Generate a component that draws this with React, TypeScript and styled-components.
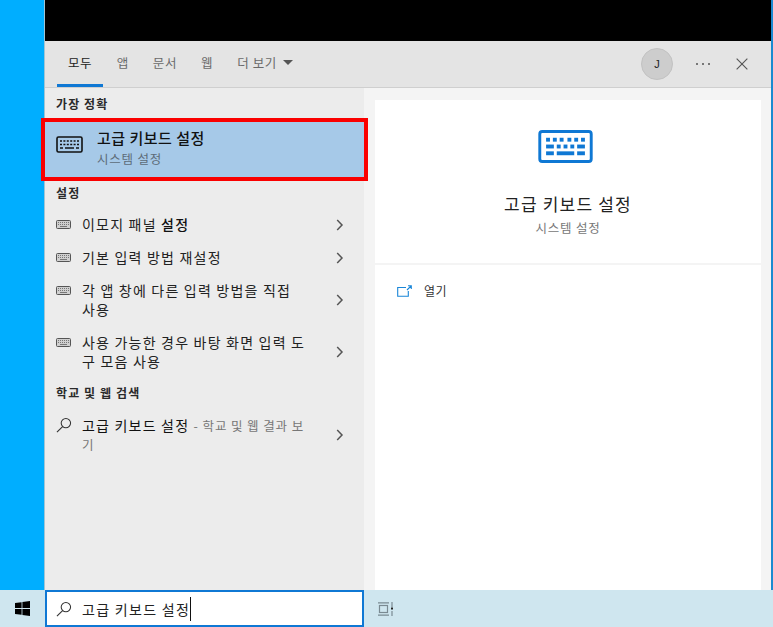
import styled, { createGlobalStyle } from "styled-components";
import type { ReactNode } from "react";

const Global = createGlobalStyle`
  html, body { margin: 0; padding: 0; }
  body {
    width: 773px;
    height: 627px;
    overflow: hidden;
    font-family: "Noto Sans CJK KR", "Liberation Sans", sans-serif;
  }
  * { box-sizing: border-box; }
`;

const Desktop = styled.div`
  width: 773px;
  height: 627px;
  display: flex;
  flex-direction: column;
  background: #00aeff;
`;
const Upper = styled.div`
  height: 590px;
  padding-left: 44px;
  display: flex;
`;
const Flyout = styled.div`
  flex: 1;
  display: flex;
  flex-direction: column;
  border-left: 1px solid #9fc4d4;
  border-right: 2px solid #1b8ad0;
`;
const BlackBar = styled.div`
  height: 41px;
  background: #000;
  flex: none;
`;
const Header = styled.div`
  height: 47px;
  flex: none;
  display: flex;
  align-items: stretch;
  padding: 0 23px 0 12px;
  background: #e4e4e4;
  border-bottom: 1px solid #cfcfcf;
`;
const Tab = styled.div<{ $active?: boolean }>`
  display: flex;
  align-items: center;
  gap: 6px;
  padding: 0 ${({ $active }) => ($active ? "11px" : "12px")} 3px;
  margin-right: ${({ $active }) => ($active ? "1.5px" : "0")};
  font-size: 12.5px;
  letter-spacing: 0.6px;
  color: ${({ $active }) => ($active ? "#222" : "#6a6a6a")};
  box-shadow: ${({ $active }) => ($active ? "inset 0 -3px 0 #0f78d4" : "none")};
`;
const Caret = styled.span`
  width: 0;
  height: 0;
  border-left: 5px solid transparent;
  border-right: 5px solid transparent;
  border-top: 5px solid #555;
`;
const HeaderRight = styled.div`
  margin-left: auto;
  display: flex;
  align-items: center;
`;
const Avatar = styled.div`
  width: 32px;
  height: 32px;
  border-radius: 50%;
  background: #cdcdcd;
  border: 1px solid #c2c2c2;
  display: flex;
  align-items: center;
  justify-content: center;
  font-size: 11px;
  color: #222;
  font-family: "Liberation Sans", sans-serif;
`;
const Dots = styled.div`
  margin-left: 23px;
  margin-right: 26px;
  display: flex;
  gap: 4px;
`;
const Dot = styled.span`
  width: 2px;
  height: 2px;
  background: #777;
`;
const Body = styled.div`
  flex: 1;
  display: flex;
  min-height: 0;
`;
const Results = styled.div`
  width: 319px;
  flex: none;
  background: #ececec;
  display: flex;
  flex-direction: column;
`;
const SectionLabel = styled.div<{ $top?: number }>`
  font-size: 12px;
  font-weight: 700;
  letter-spacing: 1.1px;
  color: #2a2a2a;
  line-height: 16px;
  padding-left: 11px;
  margin-top: ${({ $top }) => $top ?? 0}px;
`;
const BestRow = styled.div`
  height: 55px;
  flex: none;
  margin: 10px 0 8px;
  background: #a6c9e8;
  outline: 4px solid #fa0000;
  position: relative;
  z-index: 1;
  display: flex;
  align-items: flex-start;
  padding-left: 11px;
  gap: 14px;
`;
const BestIcon = styled.div`
  display: flex;
  margin-top: 14px;
`;
const BestText = styled.div`
  display: flex;
  flex-direction: column;
  margin-top: 6px;
`;
const BestTitle = styled.div`
  font-size: 15px;
  font-weight: 500;
  letter-spacing: 0.5px;
  line-height: 20px;
  color: #111;
`;
const BestSub = styled.div`
  font-size: 12.5px;
  letter-spacing: 0.8px;
  line-height: 20px;
  margin-top: 1px;
  color: #5d6c78;
`;
const Row = styled.div<{ $h: number; $top?: number }>`
  height: ${({ $h }) => $h}px;
  flex: none;
  margin-top: ${({ $top }) => $top ?? 0}px;
  display: flex;
  align-items: center;
  padding: 0 20px 0 11px;
`;
const RowIcon = styled.div<{ $pad: number }>`
  width: 26px;
  flex: none;
  align-self: flex-start;
  display: flex;
  padding-top: ${({ $pad }) => $pad}px;
`;
const RowText = styled.div`
  flex: 1;
  font-size: 14px;
  letter-spacing: 1.2px;
  line-height: 19px;
  color: #222;
  padding-right: 28px;
  word-break: break-all;
`;
const Bold = styled.span`
  font-weight: 500;
  color: #111;
`;
const Term = styled.span`
  color: #111;
`;
const Muted = styled.span`
  font-size: 12.5px;
  letter-spacing: 0.9px;
  color: #777;
`;
const Preview = styled.div`
  flex: 1;
  background: #f4f4f4;
  padding: 12px 10px 0 11px;
  display: flex;
  flex-direction: column;
  gap: 2px;
`;
const PreviewTop = styled.div`
  height: 163px;
  flex: none;
  background: #fff;
  display: flex;
  flex-direction: column;
  align-items: center;
  padding-top: 30px;
`;
const PreviewIcon = styled.div`
  display: flex;
  margin-right: 5px;
`;
const PreviewTitle = styled.div`
  margin-top: 29px;
  font-size: 17px;
  letter-spacing: 1.2px;
  line-height: 24px;
  color: #222;
`;
const PreviewSub = styled.div`
  font-size: 12.5px;
  letter-spacing: 0.8px;
  line-height: 24px;
  color: #777;
`;
const PreviewBottom = styled.div`
  flex: 1;
  background: #fff;
  padding: 17px 22px;
`;
const Action = styled.div`
  display: flex;
  align-items: center;
  gap: 12px;
  font-size: 12px;
  letter-spacing: 0.5px;
  line-height: 18px;
  color: #333;
`;
const Taskbar = styled.div`
  flex: 1;
  background: #cfe6ef;
  display: flex;
  align-items: stretch;
`;
const StartButton = styled.div`
  width: 45px;
  display: flex;
  align-items: center;
  justify-content: center;
`;
const SearchBox = styled.div`
  width: 319px;
  background: #fff;
  border: 2px solid #0f78d4;
  display: flex;
  align-items: center;
  padding-left: 9px;
  gap: 10px;
`;
const SearchText = styled.div`
  font-size: 14px;
  letter-spacing: 1.3px;
  color: #222;
  line-height: 24px;
  border-right: 1px solid #111;
`;
const TaskView = styled.div`
  display: flex;
  align-items: center;
  padding-left: 14px;
`;

const Chevron = () => (
  <svg width="8" height="12" viewBox="0 0 8 12" style={{ flex: "none" }}>
    <path d="M1.2 1l4.8 5-4.8 5" fill="none" stroke="#555" strokeWidth="1.5" />
  </svg>
);

const KeyboardSmall = () => (
  <svg width="15" height="9" viewBox="0 0 15 9">
    <rect x="0.5" y="0.5" width="14" height="8" rx="1" fill="#cfcfcf" stroke="#555" />
    <path d="M2 2.5h11M2 4.5h11" stroke="#777" strokeWidth="1" strokeDasharray="1 1" />
    <path d="M4 6.5h7" stroke="#777" />
  </svg>
);

const KeyboardDark = () => (
  <svg width="27" height="17" viewBox="0 0 27 17">
    <rect x="1" y="1" width="25" height="15" rx="1.5" fill="none" stroke="#111" strokeWidth="1.6" />
    <path d="M4 5h19" stroke="#111" strokeWidth="1.5" strokeDasharray="2 1.4" />
    <path d="M4 8.5h19" stroke="#111" strokeWidth="1.5" strokeDasharray="2 1.4" />
    <path d="M4 12h3M9 12h9M20 12h3" stroke="#111" strokeWidth="1.5" />
  </svg>
);

const KeyboardBlue = () => (
  <svg width="55" height="33" viewBox="0 0 56 34">
    <rect x="1.5" y="1.5" width="53" height="31" rx="2.5" fill="none" stroke="#0f78d4" strokeWidth="3" />
    <g fill="#0f78d4">
      <rect x="8" y="8" width="4" height="4" />
      <rect x="15" y="8" width="4" height="4" />
      <rect x="22" y="8" width="4" height="4" />
      <rect x="30" y="8" width="4" height="4" />
      <rect x="37" y="8" width="4" height="4" />
      <rect x="44" y="8" width="4" height="4" />
      <rect x="8" y="15" width="8" height="4" />
      <rect x="19" y="15" width="4" height="4" />
      <rect x="26" y="15" width="4" height="4" />
      <rect x="33" y="15" width="4" height="4" />
      <rect x="40" y="15" width="8" height="4" />
      <rect x="8" y="22" width="8" height="4" />
      <rect x="19" y="22" width="18" height="4" />
      <rect x="40" y="22" width="8" height="4" />
    </g>
  </svg>
);

const SearchGlyph = () => (
  <svg width="16" height="16" viewBox="0 0 17 17" style={{ flex: "none" }}>
    <circle cx="10.5" cy="6.5" r="5" fill="none" stroke="#333" strokeWidth="1.1" />
    <path d="M7 10.2L1 16" stroke="#333" strokeWidth="1.2" />
  </svg>
);

const OpenGlyph = () => (
  <svg width="15" height="12" viewBox="0 0 15 12">
    <path d="M9 2.5H.7v8.8h10.6V6" fill="none" stroke="#1a86d8" strokeWidth="1.1" />
    <path d="M10 5l4-4M11 .7h3.3V4" fill="none" stroke="#1a86d8" strokeWidth="1.1" />
  </svg>
);

const CloseGlyph = () => (
  <svg width="12" height="12" viewBox="0 0 13 13">
    <path d="M.7.7l11.6 11.6M12.3.7L.7 12.3" stroke="#555" strokeWidth="1.2" />
  </svg>
);

const WindowsLogo = () => (
  <svg width="15" height="15" viewBox="0 0 15 15">
    <path
      fill="#000"
      d="M0 2.1L6.6 1.2V7H0zM7.4 1.1L15 0v7H7.4zM0 8h6.6v5.8L0 12.9zM7.4 8H15v7l-7.6-1.1z"
    />
  </svg>
);

const TaskViewGlyph = () => (
  <svg width="15" height="14" viewBox="0 0 15 14">
    <g fill="none" stroke="#7a8a92" strokeWidth="1.2">
      <path d="M0 .8h11M0 13.2h11" />
      <rect x="1.5" y="3.5" width="8" height="7" />
      <path d="M14 0v5M14 9v5" />
    </g>
    <rect x="13" y="5.5" width="2" height="2" fill="#222" />
  </svg>
);

function ResultRow({
  h,
  top,
  pad = 12,
  icon,
  children,
}: {
  h: number;
  top?: number;
  pad?: number;
  icon: ReactNode;
  children: ReactNode;
}) {
  return (
    <Row $h={h} $top={top}>
      <RowIcon $pad={pad}>{icon}</RowIcon>
      <RowText>{children}</RowText>
      <Chevron />
    </Row>
  );
}

export default function App() {
  return (
    <>
      <Global />
      <Desktop>
        <Upper>
          <Flyout>
            <BlackBar />
            <Header>
              <Tab $active>모두</Tab>
              <Tab>앱</Tab>
              <Tab>문서</Tab>
              <Tab>웹</Tab>
              <Tab>
                더 보기
                <Caret />
              </Tab>
              <HeaderRight>
                <Avatar>J</Avatar>
                <Dots>
                  <Dot />
                  <Dot />
                  <Dot />
                </Dots>
                <CloseGlyph />
              </HeaderRight>
            </Header>
            <Body>
              <Results>
                <SectionLabel $top={8}>가장 정확</SectionLabel>
                <BestRow>
                  <BestIcon>
                    <KeyboardDark />
                  </BestIcon>
                  <BestText>
                    <BestTitle>고급 키보드 설정</BestTitle>
                    <BestSub>시스템 설정</BestSub>
                  </BestText>
                </BestRow>
                <SectionLabel>설정</SectionLabel>
                <ResultRow h={33} top={7} icon={<KeyboardSmall />}>
                  이모지 패널 <Bold>설정</Bold>
                </ResultRow>
                <ResultRow h={33} icon={<KeyboardSmall />}>
                  기본 입력 방법 재설정
                </ResultRow>
                <ResultRow h={52} icon={<KeyboardSmall />}>
                  각 앱 창에 다른 입력 방법을 직접 사용
                </ResultRow>
                <ResultRow h={52} icon={<KeyboardSmall />}>
                  사용 가능한 경우 바탕 화면 입력 도구 모음 사용
                </ResultRow>
                <SectionLabel $top={7}>학교 및 웹 검색</SectionLabel>
                <ResultRow h={52} top={8} pad={8} icon={<SearchGlyph />}>
                  <Term>고급 키보드 설정</Term> <Muted>- 학교 및 웹 결과 보기</Muted>
                </ResultRow>
              </Results>
              <Preview>
                <PreviewTop>
                  <PreviewIcon>
                    <KeyboardBlue />
                  </PreviewIcon>
                  <PreviewTitle>고급 키보드 설정</PreviewTitle>
                  <PreviewSub>시스템 설정</PreviewSub>
                </PreviewTop>
                <PreviewBottom>
                  <Action>
                    <OpenGlyph />
                    열기
                  </Action>
                </PreviewBottom>
              </Preview>
            </Body>
          </Flyout>
        </Upper>
        <Taskbar>
          <StartButton>
            <WindowsLogo />
          </StartButton>
          <SearchBox>
            <SearchGlyph />
            <SearchText>고급 키보드 설정</SearchText>
          </SearchBox>
          <TaskView>
            <TaskViewGlyph />
          </TaskView>
        </Taskbar>
      </Desktop>
    </>
  );
}
